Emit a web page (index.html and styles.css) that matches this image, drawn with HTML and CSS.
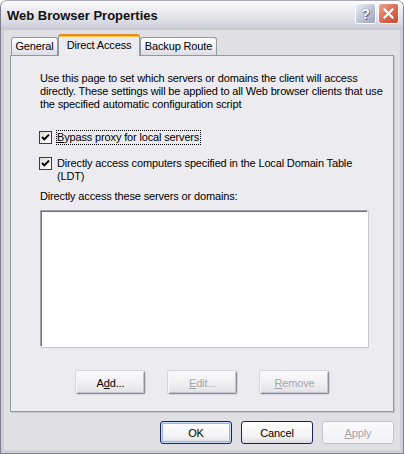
FILE: index.html
```html
<!DOCTYPE html>
<html>

<head>
    <title>Web Browser Properties</title>
    <link rel="stylesheet" href="styles.css">
</head>

<body>
    <div class="window">
        <div class="titlebar">
            <span class="title">Web Browser Properties</span>
            <div class="caption-btns">
                <span class="cap help">?</span>
                <span class="cap close">
                    <svg width="13" height="13" viewBox="0 0 13 13">
                        <path d="M2.5 2.5 L10.5 10.5 M10.5 2.5 L2.5 10.5" stroke="#fff" stroke-width="2.2" stroke-linecap="square" fill="none" />
                    </svg>
                </span>
            </div>
        </div>

        <div class="client">
            <div class="tabs">
                <div class="tab tab-general">General</div>
                <div class="tab tab-direct active">Direct Access</div>
                <div class="tab tab-backup">Backup Route</div>
            </div>

            <div class="page">
                <p class="intro">
                    Use this page to set which servers or domains the client will access<br>
                    directly. These settings will be applied to all Web browser clients that use<br>
                    the specified automatic configuration script
                </p>

                <div class="check first">
                    <span class="box">
                        <svg width="11" height="11" viewBox="0 0 11 11">
                            <path d="M2 5 L4.3 7.4 L9 2.6" stroke="#000" stroke-width="2" fill="none" />
                        </svg>
                    </span>
                    <span class="label focused"><u>B</u>ypass proxy for local servers</span>
                </div>

                <div class="check second">
                    <span class="box">
                        <svg width="11" height="11" viewBox="0 0 11 11">
                            <path d="M2 5 L4.3 7.4 L9 2.6" stroke="#000" stroke-width="2" fill="none" />
                        </svg>
                    </span>
                    <span class="label">Directly access computers specified in the Local Domain Table<br>(LDT)</span>
                </div>

                <div class="list-caption">Directly access these servers or domains:</div>
                <div class="listbox"></div>

                <div class="list-btns">
                    <button class="btn-classic">A<u>d</u>d...</button>
                    <button class="btn-classic" disabled><u>E</u>dit...</button>
                    <button class="btn-classic" disabled><u>R</u>emove</button>
                </div>
            </div>

            <div class="footer">
                <button class="btn default">OK</button>
                <button class="btn">Cancel</button>
                <button class="btn" disabled><u>A</u>pply</button>
            </div>
        </div>
    </div>
</body>

</html>
```

FILE: styles.css
```css
body {
    margin: 0;
    font-family: "Liberation Sans", Arial, sans-serif;
    font-size: 11px;
    color: #000;
    background: #fff;
}

.window {
    width: 404px;
    height: 454px;
    box-sizing: border-box;
    background: #e0dfe3;
    border: 1px solid #7e7e8c;
    border-top-color: #a8a8b6;
    border-radius: 7px 7px 0 0;
    display: flex;
    flex-direction: column;
    box-shadow: inset 3px 0 0 #d0d0d8, inset -3px 0 0 #d0d0d8, inset 0 -3px 0 #d0d0d8;
}

/* title bar */
.titlebar {
    height: 29px;
    flex: none;
    display: flex;
    align-items: center;
    justify-content: space-between;
    padding: 0 4px 0 6px;
    background: linear-gradient(#fdfdfe, #ebebf0 35%, #d6d6e0 80%, #c8c8d4);
    border-radius: 6px 6px 0 0;
}

.title {
    font-weight: bold;
    font-size: 13px;
    color: #111;
}

.caption-btns {
    display: flex;
    gap: 2px;
    align-self: flex-start;
    margin-top: 2px;
}

.cap {
    width: 21px;
    height: 21px;
    box-sizing: border-box;
    border: 1px solid #fff;
    border-radius: 3px;
    display: flex;
    align-items: center;
    justify-content: center;
}

.help {
    background: linear-gradient(135deg, #eef0f6, #b8bed2 60%, #9ca4be);
    color: #fff;
    font-weight: bold;
    font-size: 14px;
    text-shadow: 0 0 1px #4a5068, 1px 1px 0 #6a7088;
}

.close {
    background: linear-gradient(135deg, #f0a08c, #dc6a50 55%, #c44a30);
}

/* client area */
.client {
    flex: 1;
    padding: 4px 9px 0 9px;
}

.tabs {
    display: flex;
    align-items: flex-end;
    height: 22px;
    padding-left: 1px;
    margin-bottom: -1px;
}

.tab {
    height: 18px;
    box-sizing: border-box;
    margin-bottom: 1px;
    border: 1px solid #919b9c;
    border-bottom: none;
    border-radius: 3px 3px 0 0;
    background: linear-gradient(#ffffff, #f0f0f4 50%, #dcdce4);
    line-height: 17px;
    text-align: center;
    letter-spacing: -0.15px;
}

.tab-general {
    width: 47px;
}

.tab-direct {
    width: 82px;
}

.tab-backup {
    width: 77px;
}

.tab.active {
    position: relative;
    z-index: 1;
    height: 22px;
    margin-bottom: 0;
    border-top: 2px solid #e68b2c;
    box-shadow: inset 0 1px 0 #ffc83c;
    background: #ececf0;
    line-height: 18px;
}

.page {
    height: 357px;
    box-sizing: border-box;
    border: 1px solid #919b9c;
    background: #ececf0;
    box-shadow: 1px 1px 0 #c4c4cc;
    padding: 16px 0 0 28px;
    letter-spacing: -0.15px;
}

.intro {
    margin: 0 0 0 1px;
    line-height: 13px;
    white-space: nowrap;
}

.check {
    display: flex;
    align-items: flex-start;
    gap: 4px;
}

.check.first {
    margin-top: 19px;
}

.check.second {
    margin-top: 11px;
}

.box {
    width: 13px;
    height: 13px;
    box-sizing: border-box;
    margin-top: 1px;
    border: 1px solid #3a3a46;
    background: linear-gradient(135deg, #dcdcd7, #ffffff);
    flex: none;
    display: flex;
}

.label {
    border: 1px solid transparent;
    line-height: 13px;
    padding-right: 1px;
}

.label.focused {
    border: 1px dotted #000;
}

.list-caption {
    margin: 6px 0 0 1px;
    line-height: 13px;
}

.listbox {
    width: 328px;
    height: 137px;
    box-sizing: border-box;
    margin: 7px 0 0 1px;
    background: #fff;
    border: 1px solid;
    border-color: #a0a0a8 #ffffff #ffffff #a0a0a8;
    box-shadow: inset 1px 1px 0 #707078, 1px 1px 0 #c8c8d0;
}

.list-btns {
    display: flex;
    gap: 23px;
    margin: 24px 0 0 37px;
}

button {
    font-family: "Liberation Sans", Arial, sans-serif;
    font-size: 11px;
    color: #000;
    padding: 0;
    height: 23px;
    letter-spacing: -0.15px;
}

button:disabled {
    color: #a4a4a8;
}

.btn-classic {
    width: 69px;
    border: 1px solid;
    border-color: #f8f8fa #8c8c96 #8c8c96 #f8f8fa;
    border-radius: 2px;
    background: linear-gradient(#fafafc, #eeeef2 60%, #e0e0e6);
    box-shadow: inset -1px -1px 0 #c4c4cc, 0 0 0 1px #d4d4dc;
}

.footer {
    display: flex;
    justify-content: flex-end;
    gap: 9px;
    margin-top: 9px;
}

.btn {
    width: 72px;
    border: 1px solid #1c2450;
    border-radius: 3px;
    background: linear-gradient(#ffffff, #f2f2f4 70%, #dcdce2);
}

.btn.default {
    box-shadow: inset 0 0 0 1px #c8dcfc, inset 0 0 0 2px #98b4e6;
}

.btn:disabled {
    border-color: #c4c4cc;
    background: linear-gradient(#fafafc, #f2f2f4);
}
```
